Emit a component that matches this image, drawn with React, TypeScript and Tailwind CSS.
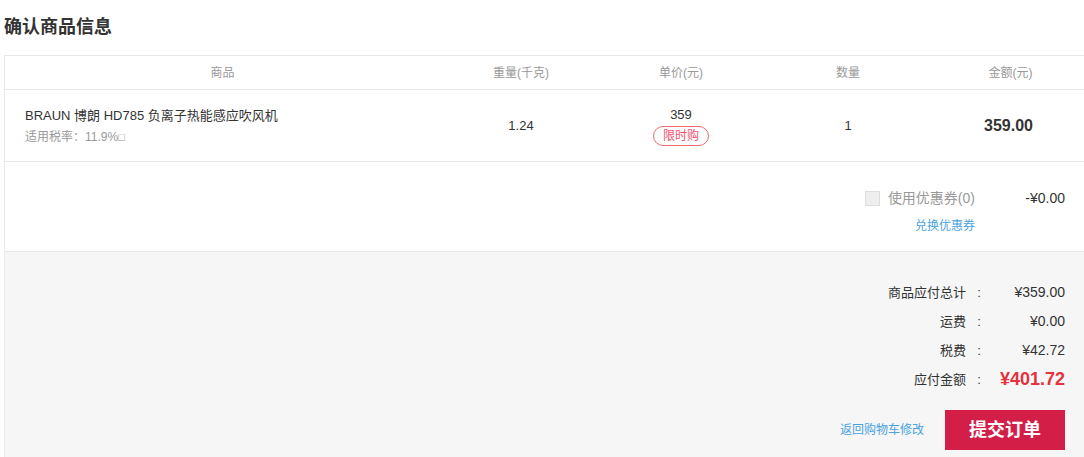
const font = { fontFamily: '"Liberation Sans", "Noto Sans CJK SC", sans-serif' };

const columns = [
  { label: "商品", width: "w-[435px]" },
  { label: "重量(千克)", width: "w-[162px]" },
  { label: "单价(元)", width: "w-[158px]" },
  { label: "数量", width: "w-[176px]" },
  { label: "金额(元)", width: "flex-1" },
];

const summary = [
  { label: "商品应付总计", value: "¥359.00" },
  { label: "运费", value: "¥0.00" },
  { label: "税费", value: "¥42.72" },
];

export default function App() {
  return (
    <div className="h-[457px] w-[1084px] overflow-hidden bg-white" style={font}>
      <div className="pl-[4px]">
        <h2 className="h-[55px] text-[18px] font-bold leading-[55px] text-[#333]">确认商品信息</h2>

        <div className="w-[1082px] border border-[#e8e8e8]">
          {/* header */}
          <div className="flex h-[34px] items-center border-b border-[#e8e8e8] text-[12px] text-[#999]">
            {columns.map((c) => (
              <div key={c.label} className={`${c.width} text-center`}>
                {c.label}
              </div>
            ))}
          </div>

          {/* product row */}
          <div className="flex h-[72px] items-center border-b border-[#e8e8e8] text-[13px] text-[#333]">
            <div className="w-[435px] pl-[20px]">
              <div className="leading-[18px]">BRAUN 博朗 HD785 负离子热能感应吹风机</div>
              <div className="mt-[4px] text-[12px] leading-[16px] text-[#999]">
                适用税率：11.9%<span className="text-[11px]">□</span>
              </div>
            </div>
            <div className="w-[162px] text-center">1.24</div>
            <div className="flex w-[158px] flex-col items-center">
              <span className="leading-[18px]">359</span>
              <span className="mt-[2px] rounded-full border border-[#f56a6a] px-[9px] text-[12px] leading-[18px] text-[#f0506e]">
                限时购
              </span>
            </div>
            <div className="w-[176px] text-center">1</div>
            <div className="flex-1 pr-[4px] text-center text-[16px] font-bold">359.00</div>
          </div>

          {/* coupon */}
          <div className="flex h-[90px] flex-col items-end border-b border-[#e8e8e8] pr-[20px] pt-[27px]">
            <div className="flex items-center">
              <span className="mr-[8px] h-[15px] w-[15px] border border-[#ddd] bg-[#eee]" />
              <span className="text-[14px] leading-[18px] text-[#999]">使用优惠券(0)</span>
              <span className="w-[90px] text-right text-[14px] leading-[18px] text-[#333]">-¥0.00</span>
            </div>
            <div className="mr-[90px] mt-[11px] text-[12px] leading-[16px] text-[#4aa3df]">兑换优惠券</div>
          </div>

          {/* totals */}
          <div className="flex h-[220px] flex-col items-end bg-[#f6f6f6] pr-[20px] pt-[26px]">
            {summary.map((s) => (
              <div key={s.label} className="flex h-[29px] items-center text-[13px] text-[#333]">
                <span>{s.label}</span>
                <span className="w-[26px] text-center">:</span>
                <span className="w-[73px] text-right text-[14px]">{s.value}</span>
              </div>
            ))}
            <div className="flex h-[29px] items-center text-[13px] text-[#333]">
              <span>应付金额</span>
              <span className="w-[26px] text-center">:</span>
              <span className="w-[73px] text-right text-[18px] font-bold text-[#e5323c]">¥401.72</span>
            </div>
            <div className="mt-[16px] flex items-center">
              <span className="mr-[21px] text-[12px] text-[#4aa3df]">返回购物车修改</span>
              <button className="h-[40px] w-[120px] bg-[#d31f47] text-[18px] font-bold text-white">提交订单</button>
            </div>
          </div>
        </div>
      </div>
    </div>
  );
}
